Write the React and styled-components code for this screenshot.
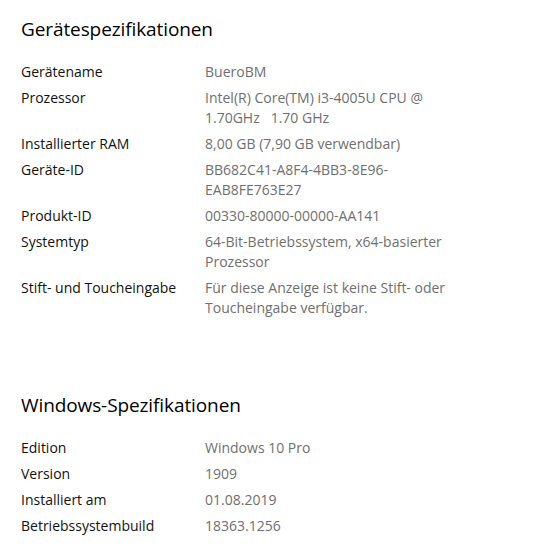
import React from "react";
import styled, { createGlobalStyle } from "styled-components";

const Global = createGlobalStyle`
  html, body { margin: 0; padding: 0; background: #ffffff; }
  body { font-family: "Open Sans", "Noto Sans", sans-serif; -webkit-font-smoothing: antialiased; }
`;

const Page = styled.div`
  padding: 15px 21px 0 21px;
  display: flex;
  flex-direction: column;
`;

const Section = styled.section`
  display: flex;
  flex-direction: column;
  gap: 19px;
  margin-top: ${(p) => p.$top || 0}px;
`;

const Heading = styled.h2`
  margin: 0;
  font-size: 19px;
  line-height: 28px;
  font-weight: 400;
  color: #000000;
  letter-spacing: -0.1px;
`;

const Rows = styled.div`
  display: flex;
  flex-direction: column;
  gap: 6px;
`;

const Row = styled.div`
  display: grid;
  grid-template-columns: 184px 1fr;
  font-size: 14px;
  line-height: 20px;
`;

const Label = styled.div`
  color: #111111;
`;

const Value = styled.div`
  color: #6f6f6f;
  display: flex;
  flex-direction: column;
`;

const Line = styled.span`
  white-space: pre;
`;

const device = [
  ["Gerätename", ["BueroBM"]],
  ["Prozessor", ["Intel(R) Core(TM) i3-4005U CPU @", "1.70GHz   1.70 GHz"]],
  ["Installierter RAM", ["8,00 GB (7,90 GB verwendbar)"]],
  ["Geräte-ID", ["BB682C41-A8F4-4BB3-8E96-", "EAB8FE763E27"]],
  ["Produkt-ID", ["00330-80000-00000-AA141"]],
  ["Systemtyp", ["64-Bit-Betriebssystem, x64-basierter", "Prozessor"]],
  ["Stift- und Toucheingabe", ["Für diese Anzeige ist keine Stift- oder", "Toucheingabe verfügbar."]],
];

const windows = [
  ["Edition", ["Windows 10 Pro"]],
  ["Version", ["1909"]],
  ["Installiert am", ["01.08.2019"]],
  ["Betriebssystembuild", ["18363.1256"]],
];

function SpecList({ items }) {
  return (
    <Rows>
      {items.map(([label, lines]) => (
        <Row key={label}>
          <Label>{label}</Label>
          <Value>
            {lines.map((l, i) => (
              <Line key={i}>{l}</Line>
            ))}
          </Value>
        </Row>
      ))}
    </Rows>
  );
}

export default function App() {
  return (
    <>
      <Global />
      <Page>
        <Section>
          <Heading>Gerätespezifikationen</Heading>
          <SpecList items={device} />
        </Section>
        <Section $top={73}>
          <Heading>Windows-Spezifikationen</Heading>
          <SpecList items={windows} />
        </Section>
      </Page>
    </>
  );
}
